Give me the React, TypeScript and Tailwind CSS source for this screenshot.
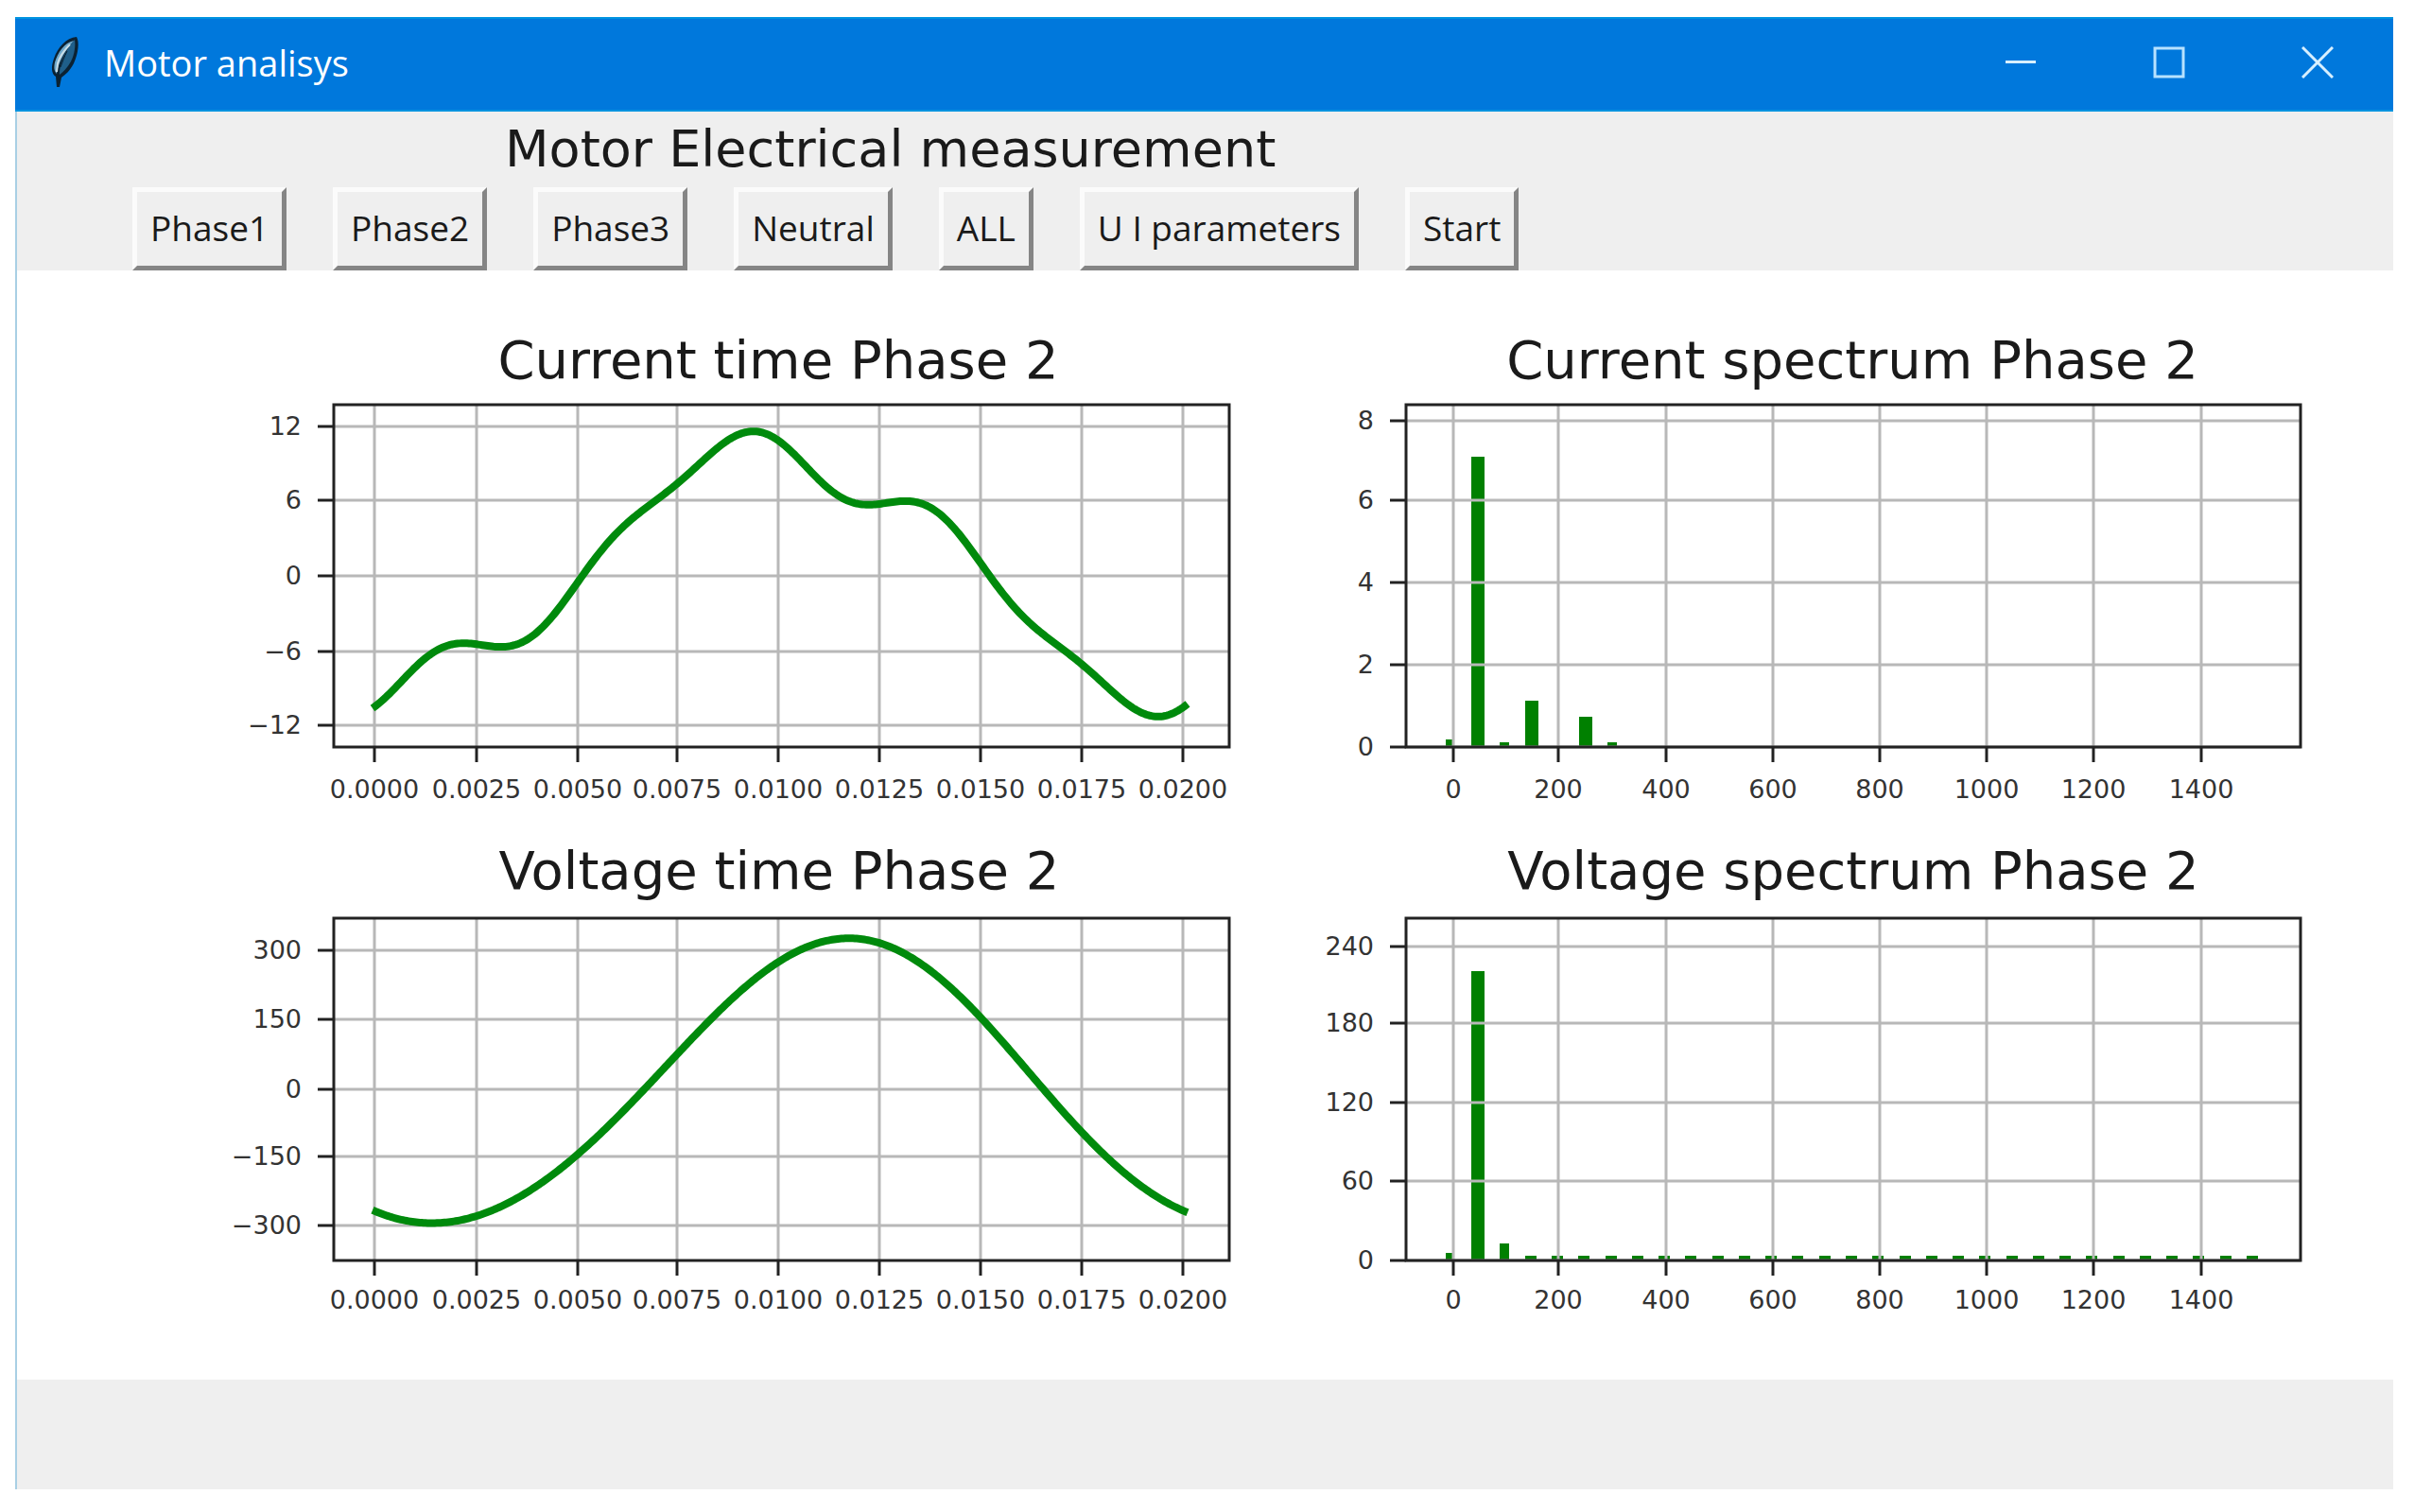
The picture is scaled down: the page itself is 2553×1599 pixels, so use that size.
type Tick = { at: number; label: string };
type Bar = { x: number; width: number; top: number };
// offset plus [order, cos, sin] of every harmonic, in plot units
type Wave = { offset: number; harmonics: number[][] };

type ChartProps = {
  title: string;
  titleX: number;
  box: { left: number; top: number; right: number; bottom: number };
  xTicks: Tick[];
  yTicks: Tick[];
  wave?: Wave;
  bars?: Bar[];
};

const buttons = ['Phase1', 'Phase2', 'Phase3', 'Neutral', 'ALL', 'U I parameters', 'Start'];

const timeTicks: Tick[] = [
  { at: 176, label: '0.0000' },
  { at: 284, label: '0.0025' },
  { at: 391, label: '0.0050' },
  { at: 496, label: '0.0075' },
  { at: 603, label: '0.0100' },
  { at: 710, label: '0.0125' },
  { at: 817, label: '0.0150' },
  { at: 924, label: '0.0175' },
  { at: 1031, label: '0.0200' },
];

const frequencyTicks: Tick[] = [
  { at: 183, label: '0' },
  { at: 294, label: '200' },
  { at: 408, label: '400' },
  { at: 521, label: '600' },
  { at: 634, label: '800' },
  { at: 747, label: '1000' },
  { at: 860, label: '1200' },
  { at: 974, label: '1400' },
];

const currentWave: Wave = {
  offset: 267,
  harmonics: [
    [1, 130.5, -2.7],
    [3, -1.5, -20.1],
    [5, 11.5, -7.2],
  ],
};

const voltageWave: Wave = {
  offset: 269,
  harmonics: [
    [1, 131.9, 72.3],
    [2, -0.3, -7.1],
  ],
};

const currentBars: Bar[] = [
  { x: 175, width: 7, top: 442 },
  { x: 202, width: 14, top: 143 },
  { x: 232, width: 10, top: 445 },
  { x: 259, width: 14, top: 401 },
  { x: 316, width: 14, top: 418 },
  { x: 346, width: 10, top: 445 },
];

const voltageBars: Bar[] = [
  { x: 175, width: 7, top: 445 },
  { x: 202, width: 14, top: 147 },
  { x: 232, width: 10, top: 435 },
  // harmonics from 150 Hz to 1500 Hz are all close to zero
  ...Array.from({ length: 28 }, (_, i) => ({
    x: Math.round(180 + 0.5653 * (150 + i * 50)) - 6,
    width: 12,
    top: 448,
  })),
];

const WAVE_START = 174;
const WAVE_END = 1036;
const PERIOD = 856;

function wavePath({ offset, harmonics }: Wave) {
  const points: string[] = [];
  for (let x = WAVE_START; x <= WAVE_END; x += 2) {
    const angle = (2 * Math.PI * (x - 176)) / PERIOD;
    const y = harmonics.reduce(
      (sum, [n, a, b]) => sum + a * Math.cos(n * angle) + b * Math.sin(n * angle),
      offset
    );
    points.push(`${x} ${y.toFixed(2)}`);
  }
  return `M${points.join('L')}`;
}

function Chart({ title, titleX, box, xTicks, yTicks, wave, bars = [] }: ChartProps) {
  return (
    <svg viewBox="0 0 1134 540" role="img" aria-label={title} className="block w-full font-['DejaVu_Sans',sans-serif]">
      <text x={titleX} y={60} textAnchor="middle" className="fill-[#1a1a1a] text-[56px]">
        {title}
      </text>

      {bars.map((bar) => (
        <rect key={bar.x} x={bar.x} y={bar.top} width={bar.width} height={box.bottom - bar.top} className="fill-[#008000]" />
      ))}

      {/* Grid */}
      <g className="stroke-[#b8b8b8] stroke-[3px]">
        {xTicks.map((tick) => (
          <line key={tick.label} x1={tick.at} y1={box.top} x2={tick.at} y2={box.bottom} />
        ))}
        {yTicks.map((tick) => (
          <line key={tick.label} x1={box.left} y1={tick.at} x2={box.right} y2={tick.at} />
        ))}
      </g>

      {wave && <path d={wavePath(wave)} className="fill-none stroke-[#008a0c] stroke-[8px]" />}

      {/* Axes */}
      <g className="fill-none stroke-[#222222] stroke-[3px]">
        {xTicks.map((tick) => (
          <line key={tick.label} x1={tick.at} y1={box.bottom} x2={tick.at} y2={box.bottom + 16} />
        ))}
        {yTicks.map((tick) => (
          <line key={tick.label} x1={box.left - 17} y1={tick.at} x2={box.left} y2={tick.at} />
        ))}
        <rect x={box.left} y={box.top} width={box.right - box.left} height={box.bottom - box.top} />
      </g>

      <g className="fill-[#333333] text-[27px]">
        {xTicks.map((tick) => (
          <text key={tick.label} x={tick.at} y={504} textAnchor="middle">
            {tick.label}
          </text>
        ))}
        {yTicks.map((tick) => (
          <text key={tick.label} x={box.left - 34} y={tick.at + 9} textAnchor="end">
            {tick.label}
          </text>
        ))}
      </g>
    </svg>
  );
}

function FeatherIcon() {
  return (
    <svg viewBox="0 0 32 56" className="h-14 w-8">
      <path d="M29 1 C32 6 31 18 26 29 C22 37 17 41 13 44 L11 54 L8 54 L7 43 C2 40 2 32 5 24 C9 12 18 2 29 1Z" fill="#0b2233" />
      <path d="M27 4 C28 10 27 19 23 27 C19 34 15 38 11 41 C10 33 17 14 27 4Z" fill="#1f5f8a" />
      <path d="M26 5 C16 7 9 18 6 28 C5 33 5 37 8 40 C9 30 16 16 26 5Z" fill="#6fa9cc" />
      <path d="M22 9 C16 15 11 22 9 29 L8 38" fill="none" stroke="#c9dde6" strokeWidth="2" />
      <path d="M19 16 C16 22 14 28 12 33" fill="none" stroke="#0b2233" strokeWidth="1" />
    </svg>
  );
}

function TitleBar() {
  return (
    <header className="flex h-[100px] items-center border-y-2 border-[#0093e0] bg-[#0078dc] pr-0.5 pb-1 pl-9 text-white">
      <FeatherIcon />
      <span className="ml-[26px] font-['Open_Sans',sans-serif] text-[38px] leading-[50px]">Motor analisys</span>
      <div className="ml-auto flex h-full">
        <button aria-label="Minimize" className="flex w-[157px] items-center justify-center">
          <svg viewBox="0 0 34 34" className="size-[34px] fill-none stroke-[#d8f0ff] stroke-[3px]">
            <path d="M1 16.5H33" />
          </svg>
        </button>
        <button aria-label="Maximize" className="flex w-[157px] items-center justify-center">
          <svg viewBox="0 0 34 34" className="size-[34px] fill-none stroke-[#b8e2ff] stroke-[3px]">
            <rect x="2" y="2" width="30" height="30" />
          </svg>
        </button>
        <button aria-label="Close" className="flex w-[157px] items-center justify-center">
          <svg viewBox="0 0 34 34" className="size-[34px] fill-none stroke-[#d8f0ff] stroke-[3px]">
            <path d="M1 1L33 33M33 1L1 33" />
          </svg>
        </button>
      </div>
    </header>
  );
}

export default function App() {
  return (
    <div className="bg-white pt-[18px] pr-[22px] pb-6 pl-4 text-[#1a1a1a]">
      <TitleBar />

      <main className="border-l-2 border-[#a9cfe4]">
        <div className="bg-[#efefef]">
          <h1 className="pl-[516px] font-['DejaVu_Sans',sans-serif] text-[54px] leading-[80px]">Motor Electrical measurement</h1>
          <div className="flex gap-[49px] pl-[122px]">
            {buttons.map((label) => (
              <button
                key={label}
                className="h-[88px] border-5 border-t-[#fbfbfb] border-r-[#858585] border-b-[#858585] border-l-[#fbfbfb] px-[14px] pb-0.5 font-['Open_Sans',sans-serif] text-[37px]"
              >
                {label}
              </button>
            ))}
          </div>
        </div>

        <section className="grid grid-cols-2 pt-[54px] pr-[43px] pb-[39px] pl-[202px]">
          <Chart
            title="Current time Phase 2"
            titleX={603}
            box={{ left: 133, top: 88, right: 1080, bottom: 450 }}
            xTicks={timeTicks}
            yTicks={[
              { at: 111, label: '12' },
              { at: 189, label: '6' },
              { at: 269, label: '0' },
              { at: 349, label: '−6' },
              { at: 427, label: '−12' },
            ]}
            wave={currentWave}
          />
          <Chart
            title="Current spectrum Phase 2"
            titleX={605}
            box={{ left: 133, top: 88, right: 1079, bottom: 450 }}
            xTicks={frequencyTicks}
            yTicks={[
              { at: 105, label: '8' },
              { at: 189, label: '6' },
              { at: 276, label: '4' },
              { at: 363, label: '2' },
              { at: 450, label: '0' },
            ]}
            bars={currentBars}
          />
          <Chart
            title="Voltage time Phase 2"
            titleX={604}
            box={{ left: 133, top: 91, right: 1080, bottom: 453 }}
            xTicks={timeTicks}
            yTicks={[
              { at: 125, label: '300' },
              { at: 198, label: '150' },
              { at: 272, label: '0' },
              { at: 343, label: '−150' },
              { at: 416, label: '−300' },
            ]}
            wave={voltageWave}
          />
          <Chart
            title="Voltage spectrum Phase 2"
            titleX={606}
            box={{ left: 133, top: 91, right: 1079, bottom: 453 }}
            xTicks={frequencyTicks}
            yTicks={[
              { at: 121, label: '240' },
              { at: 202, label: '180' },
              { at: 286, label: '120' },
              { at: 369, label: '60' },
              { at: 453, label: '0' },
            ]}
            bars={voltageBars}
          />
        </section>

        <footer className="h-[116px] bg-[#efefef]" />
      </main>
    </div>
  );
}
